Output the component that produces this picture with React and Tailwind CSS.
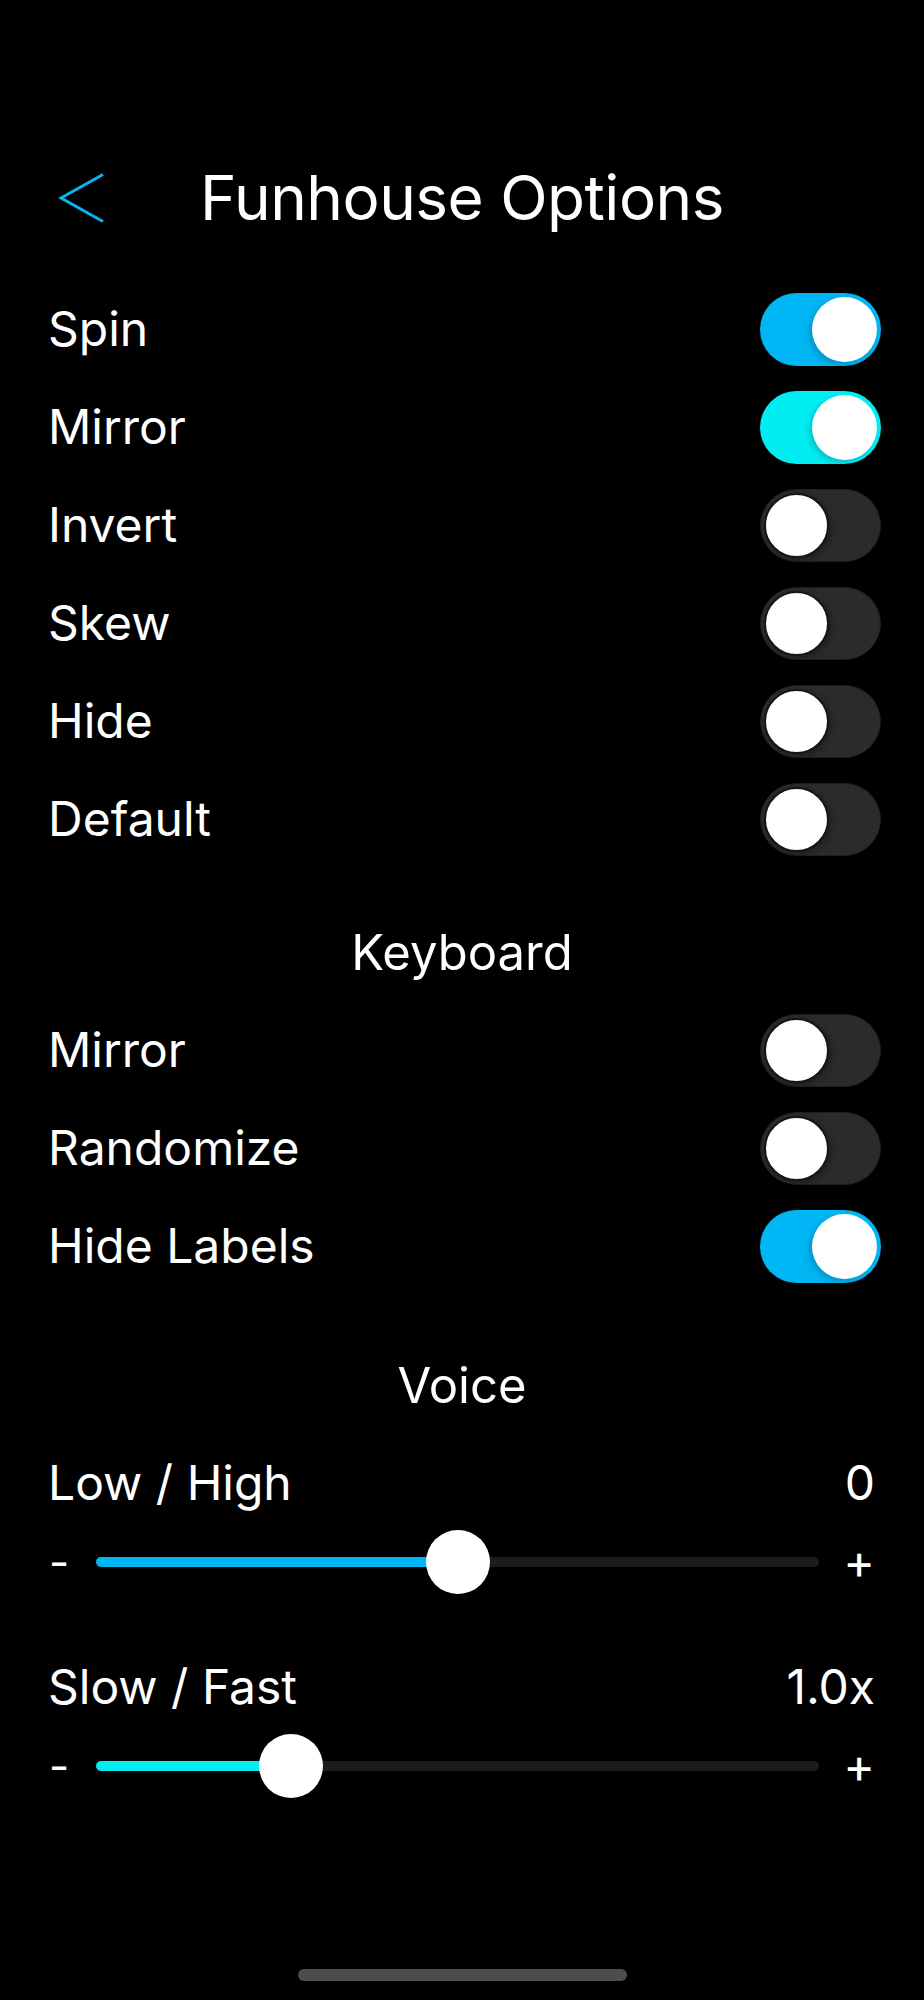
import React from "react";

const font = { fontFamily: "Inter, 'Noto Sans', 'Liberation Sans', sans-serif" };

function Toggle({ on, color }) {
  if (on) {
    return (
      <div className={`relative w-[121px] h-[73px] rounded-full shrink-0 ${color}`}>
        <div className="absolute right-[4px] top-[4px] w-[65px] h-[65px] rounded-full bg-white shadow-[-3px_3px_6px_rgba(0,0,0,0.18)]" />
      </div>
    );
  }
  return (
    <div className="relative w-[121px] h-[73px] rounded-full shrink-0 bg-[#2b2b2b] border border-[#1f1f1f]">
      <div className="absolute left-[3px] top-[3px] w-[65px] h-[65px] rounded-full bg-white border-[2px] border-[#151515] shadow-[2px_2px_6px_rgba(0,0,0,0.35)]" />
    </div>
  );
}

function Row({ label, on, color }) {
  return (
    <div className="flex items-center justify-between h-[98px] pl-[48px] pr-[43px]">
      <span className="text-[48px] text-white leading-none">{label}</span>
      <Toggle on={on} color={color} />
    </div>
  );
}

function Slider({ label, value, pct, fill }) {
  return (
    <div className="pl-[48px] pr-[49px]">
      <div className="flex items-center justify-between h-[60px] text-[48px] text-white leading-none">
        <span>{label}</span>
        <span>{value}</span>
      </div>
      <div className="flex items-center h-[64px] mt-[17px]">
        <span className="w-[48px] text-[44px] text-white leading-none pl-[1px]">-</span>
        <div className="relative flex-1 h-[10px] rounded-full bg-[#1c1c1e]">
          <div className={`absolute left-0 top-0 h-[10px] rounded-full ${fill}`} style={{ width: pct + "%" }} />
          <div
            className="absolute top-1/2 w-[64px] h-[64px] -mt-[32px] -ml-[32px] rounded-full bg-white"
            style={{ left: pct + "%" }}
          />
        </div>
        <span className="w-[56px] text-right text-[48px] text-white leading-none">+</span>
      </div>
    </div>
  );
}

export default function App() {
  return (
    <div className="w-[924px] h-[2000px] bg-black flex flex-col" style={font}>
      <div className="relative mt-[148px] h-[100px] flex items-center justify-center">
        <svg className="absolute left-[58px] top-[25px]" width="47" height="50" viewBox="0 0 47 50">
          <polyline points="45,1.5 3,25 45,48.5" fill="none" stroke="#0ab4f0" strokeWidth="3" strokeLinejoin="miter" />
        </svg>
        <span className="text-[62px] text-white leading-none tracking-[-0.008em]">Funhouse Options</span>
      </div>
      <div className="mt-[32px]">
        <Row label="Spin" on color="bg-[#00b6f4]" />
        <Row label="Mirror" on color="bg-[#00eef3]" />
        <Row label="Invert" />
        <Row label="Skew" />
        <Row label="Hide" />
        <Row label="Default" />
      </div>
      <div className="pt-[54px] pb-[19px] h-[133px] flex justify-center">
        <span className="h-[60px] flex items-center text-[49px] text-white leading-none">Keyboard</span>
      </div>
      <div>
        <Row label="Mirror" />
        <Row label="Randomize" />
        <Row label="Hide Labels" on color="bg-[#00b6f4]" />
      </div>
      <div className="pt-[60px] flex justify-center">
        <span className="h-[60px] flex items-center text-[49px] text-white leading-none">Voice</span>
      </div>
      <div className="mt-[38px]">
        <Slider label="Low / High" value="0" pct={50} fill="bg-[#00b6f4]" />
      </div>
      <div className="mt-[63px]">
        <Slider label="Slow / Fast" value="1.0x" pct={27} fill="bg-[#00eef3]" />
      </div>
      <div className="mt-auto mb-[19px] flex justify-center">
        <div className="w-[329px] h-[12px] rounded-full bg-[#4d4d4d]" />
      </div>
    </div>
  );
}
